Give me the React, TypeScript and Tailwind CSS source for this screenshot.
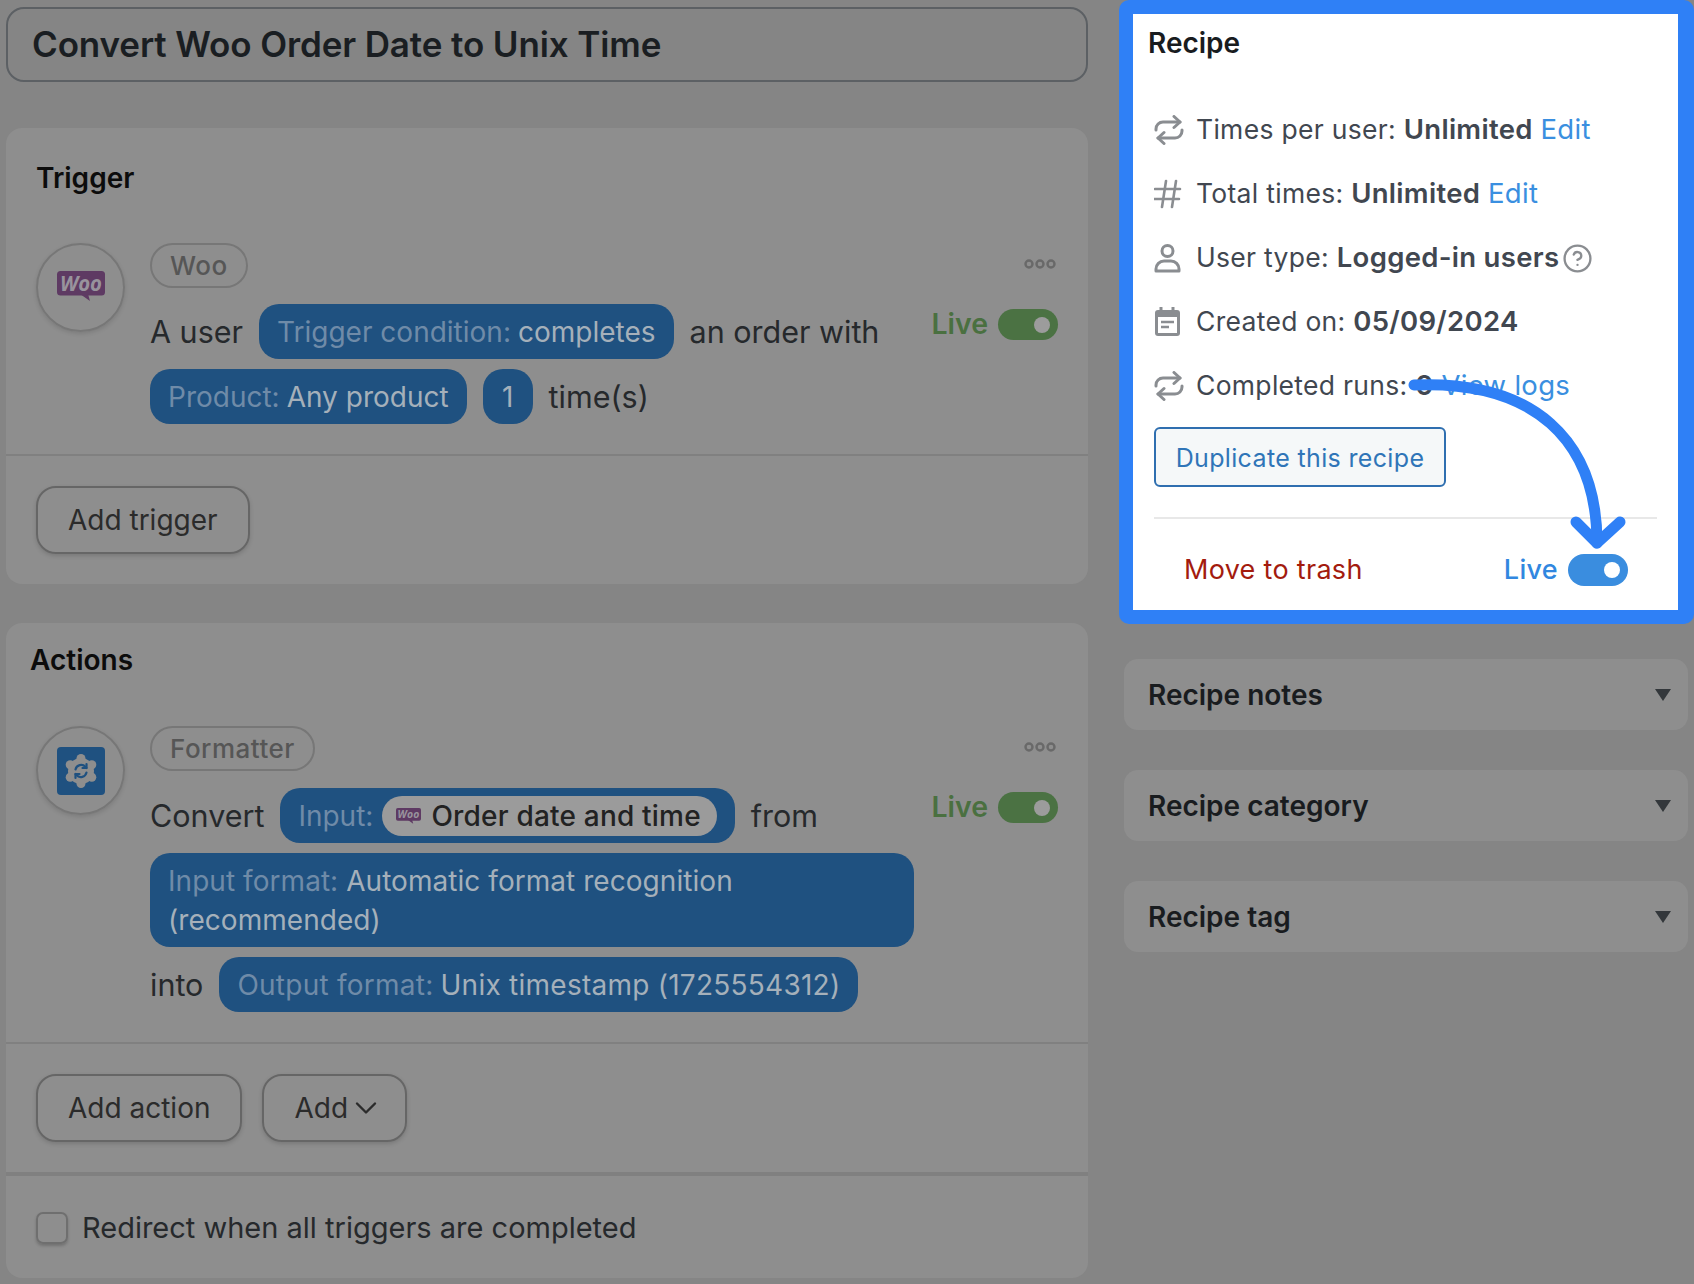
import { ChevronDown, CircleHelp } from "lucide-react";
import type { ReactNode } from "react";

function Pill({ label, value, wide }: { label?: string; value: string; wide?: boolean }) {
  return (
    <span className={`inline-flex h-[55px] items-center rounded-[20px] bg-[#1f5180] whitespace-nowrap text-[28px] text-[#a5b0ba] ${wide ? "px-[18px] tracking-[0.25px]" : "px-[18px]"}`}>
      {label && <span className="mr-[7px] text-[#6f8ba8]">{label}</span>}
      {value}
    </span>
  );
}

function Tag({ children }: { children: ReactNode }) {
  return (
    <div className="flex">
      <span className="flex h-[45px] items-center rounded-full border-2 border-[#777777] px-[18px] text-[26px] leading-none font-medium tracking-[0.5px] text-[#565656]">
        {children}
      </span>
    </div>
  );
}

function Dots() {
  return (
    <svg width="32" height="10" viewBox="0 0 32 10" fill="none" stroke="#696969" strokeWidth="2.4">
      <circle cx="5" cy="5" r="3.5" />
      <circle cx="16" cy="5" r="3.5" />
      <circle cx="27" cy="5" r="3.5" />
    </svg>
  );
}

function LiveToggle() {
  return (
    <div className="flex items-center gap-[10px]">
      <span className="text-[28.5px] leading-none font-semibold text-[#4a7040]">Live</span>
      <span className="flex h-[31px] w-[60px] items-center justify-end rounded-full bg-[#4b7243] pr-[8px]">
        <span className="h-[16px] w-[16px] rounded-full bg-[#9c9c9c]" />
      </span>
    </div>
  );
}

function OutlineButton({ children }: { children: ReactNode }) {
  return (
    <button className="flex h-[68px] items-center rounded-[20px] border-2 border-[#666666] px-[30px] text-[28px] text-[#2b2b2b] shadow-[0_2px_4px_rgba(0,0,0,0.15)]">
      {children}
    </button>
  );
}

function Circle({ children }: { children: ReactNode }) {
  return (
    <div className="flex h-[89px] w-[89px] shrink-0 items-center justify-center rounded-full border-2 border-[#777777] shadow-[0_2px_4px_rgba(0,0,0,0.12)]">
      {children}
    </div>
  );
}

function WooLogo({ width }: { width: number }) {
  return (
    <svg width={width} viewBox="0 0 48 30" className="shrink-0 overflow-visible">
      <rect y="0" width="48" height="24.5" rx="3.5" fill="#5e3a63" />
      <path d="M23 23l10 7-2-7z" fill="#5e3a63" />
      <text x="24" y="19.5" textAnchor="middle" fontSize="21" fontWeight="700" fontStyle="italic" fill="#98939c" style={{ fontFamily: "'Open Sans', Inter, sans-serif" }} textLength="42" lengthAdjust="spacingAndGlyphs">
        Woo
      </text>
    </svg>
  );
}

function FormatterIcon() {
  return (
    <svg width="48" height="48" viewBox="0 0 48 48">
      <rect width="48" height="48" rx="4" fill="#1f5180" />
      <g fill="#8e8e8e">
        <circle cx="24" cy="24" r="13" />
        <circle cx="24" cy="11.5" r="4.5" />
        <circle cx="24" cy="36.5" r="4.5" />
        <circle cx="13.2" cy="17.8" r="4.5" />
        <circle cx="34.8" cy="17.8" r="4.5" />
        <circle cx="13.2" cy="30.2" r="4.5" />
        <circle cx="34.8" cy="30.2" r="4.5" />
      </g>
      <g fill="none" stroke="#1f5180" strokeWidth="2.2" strokeLinecap="round" strokeLinejoin="round">
        <path d="M18.5 22.5a5.8 5.8 0 0 1 10-2.6l1 1.1" />
        <path d="M29.5 17v4h-4" />
        <path d="M29.5 25.5a5.8 5.8 0 0 1-10 2.6l-1-1.1" />
        <path d="M18.5 31v-4h4" />
      </g>
    </svg>
  );
}

function RepeatIcon() {
  return (
    <svg width="30" height="30" viewBox="0 0 30 30" fill="none" stroke="#8a8d91" strokeWidth="3" strokeLinecap="round" strokeLinejoin="round">
      <path d="M20 1.5l6 5.5-6 5.5" />
      <path d="M26 7H9a7 7 0 0 0-7 7v1" />
      <path d="M10 28.5l-6-5.5 6-5.5" />
      <path d="M4 23h17a7 7 0 0 0 7-7v-1" />
    </svg>
  );
}

function HashIcon() {
  return (
    <svg width="30" height="30" viewBox="0 0 30 30" fill="none" stroke="#8a8d91" strokeWidth="2.6" strokeLinecap="round">
      <path d="M1 10h25M0 20h25M12 2L8 28M22 2l-4 26" />
    </svg>
  );
}

function UserIcon() {
  return (
    <svg width="30" height="30" viewBox="0 0 30 30" fill="none" stroke="#8a8d91" strokeWidth="3" strokeLinejoin="round">
      <circle cx="13.5" cy="8" r="5.5" />
      <path d="M2 28v-2a8 8 0 0 1 8-8h7a8 8 0 0 1 8 8v2z" />
    </svg>
  );
}

function CalendarIcon() {
  return (
    <svg width="30" height="30" viewBox="0 0 30 30" fill="none">
      <path d="M7 0.5v4M19 0.5v4" stroke="#8a8d91" strokeWidth="3" strokeLinecap="round" />
      <rect x="1" y="3" width="25" height="26" rx="3" fill="#8a8d91" />
      <rect x="4" y="10" width="19" height="16" fill="#ffffff" />
      <path d="M7 15h13M7 20h8" stroke="#8a8d91" strokeWidth="2.4" />
    </svg>
  );
}

function InfoRow({ icon, children }: { icon: ReactNode; children: ReactNode }) {
  return (
    <div className="flex h-[34px] items-center">
      <span className="flex w-[42px] shrink-0">{icon}</span>
      <span className="text-[26.5px] tracking-[0.3px] whitespace-nowrap text-[#414750]">{children}</span>
    </div>
  );
}

function Strong({ children }: { children: ReactNode }) {
  return <b className="text-[27.5px] font-semibold">{children}</b>;
}

function Link({ children }: { children: ReactNode }) {
  return <span className="text-[27.5px] text-[#3a8fe0]">{children}</span>;
}

function SideCard({ title }: { title: string }) {
  return (
    <div className="flex h-[71px] items-center justify-between rounded-[14px] bg-[#8e8e8e] pr-[17px] pl-[24px]">
      <span className="text-[28px] font-semibold text-[#191c1f]">{title}</span>
      <span className="h-0 w-0 border-x-[8px] border-t-[12px] border-x-transparent border-t-[#33373b]" />
    </div>
  );
}

export default function App() {
  return (
    <div
      className="flex h-[1284px] w-[1694px] overflow-hidden bg-[#858585] text-[30.5px] text-[#26292c]"
      style={{ fontFamily: "Inter, 'Noto Sans', sans-serif" }}
    >
      {/* Left column */}
      <div className="ml-[6px] flex w-[1082px] shrink-0 flex-col pt-[7px]">
        <div className="flex h-[75px] items-center rounded-[18px] border-2 border-[#5c6064] pl-[24px] text-[35px] font-semibold tracking-[-0.12px] text-[#1a1e22]">
          Convert Woo Order Date to Unix Time
        </div>

        {/* Trigger */}
        <div className="mt-[46px] flex h-[456px] flex-col rounded-[16px] bg-[#8e8e8e]">
          <div className="pt-[35px] pl-[30px] text-[28px] leading-[30px] font-semibold text-[#0c0c0c]">Trigger</div>
          <div className="mt-[50px] flex h-[213px] gap-[25px] border-b-2 border-[#808080] pr-[30px] pl-[30px]">
            <Circle>
              <div className="mb-[3px] flex">
                <WooLogo width={48} />
              </div>
            </Circle>
            <div className="min-w-0 flex-1">
              <Tag>Woo</Tag>
              <div className="mt-[16px] flex flex-wrap items-center gap-x-[16px] gap-y-[10px]">
                <span>A user</span>
                <Pill label="Trigger condition:" value="completes" />
                <span>an order with</span>
                <div className="flex basis-full items-center gap-[16px]">
                  <Pill label="Product:" value="Any product" />
                  <span className="inline-flex h-[55px] w-[50px] items-center justify-center rounded-[20px] bg-[#1f5180] text-[28px] text-[#a5b0ba]">1</span>
                  <span>time(s)</span>
                </div>
              </div>
            </div>
            <div className="flex w-[128px] shrink-0 flex-col items-end">
              <div className="mt-[16px] mr-[2px] flex">
                <Dots />
              </div>
              <div className="mt-[40px]">
                <LiveToggle />
              </div>
            </div>
          </div>
          <div className="pt-[30px] pl-[30px]">
            <div className="flex">
              <OutlineButton>Add trigger</OutlineButton>
            </div>
          </div>
        </div>

        {/* Actions */}
        <div className="mt-[39px] flex h-[655px] flex-col rounded-[16px] bg-[#8e8e8e]">
          <div className="pt-[22px] pl-[24px] text-[28px] leading-[30px] font-semibold text-[#0c0c0c]">Actions</div>
          <div className="mt-[51px] flex h-[318px] gap-[25px] border-b-2 border-[#808080] pr-[30px] pl-[30px]">
            <Circle>
              <FormatterIcon />
            </Circle>
            <div className="min-w-0 flex-1">
              <Tag>Formatter</Tag>
              <div className="mt-[17px] flex items-center gap-[16px]">
                <span>Convert</span>
                <span className="inline-flex h-[55px] items-center rounded-[20px] bg-[#1f5180] px-[18px] text-[28px] whitespace-nowrap">
                  <span className="mr-[9px] text-[#6f8ba8]">Input:</span>
                  <span className="inline-flex h-[40px] items-center rounded-full bg-[#9b9b9b] pr-[16px] pl-[14px] font-medium tracking-[0.2px] text-[#222222]">
                    <span className="mr-[10px] flex">
                      <WooLogo width={25} />
                    </span>
                    Order date and time
                  </span>
                </span>
                <span>from</span>
              </div>
              <div className="mt-[10px] w-[764px] rounded-[20px] bg-[#1f5180] px-[18px] pt-[9px] pb-[7px] text-[28px] leading-[39px] tracking-[0.05px] text-[#a5b0ba]">
                <span className="text-[#6f8ba8]">Input format:</span> Automatic format recognition (recommended)
              </div>
              <div className="mt-[10px] flex items-center gap-[16px]">
                <span>into</span>
                <Pill wide label="Output format:" value="Unix timestamp (1725554312)" />
              </div>
            </div>
            <div className="flex w-[128px] shrink-0 flex-col items-end">
              <div className="mt-[16px] mr-[2px] flex">
                <Dots />
              </div>
              <div className="mt-[40px]">
                <LiveToggle />
              </div>
            </div>
          </div>
          <div className="flex h-[132px] gap-[20px] border-b-4 border-[#808080] pt-[30px] pl-[30px]">
            <OutlineButton>Add action</OutlineButton>
            <OutlineButton>
              Add
              <ChevronDown size={36} strokeWidth={1.6} className="mr-[-9px]" />
            </OutlineButton>
          </div>
          <div className="flex items-center gap-[14px] pt-[30px] pl-[30px] text-[29px]">
            <span className="h-[32px] w-[32px] rounded-[7px] border-2 border-[#6f6f6f] shadow-[0_2px_3px_rgba(0,0,0,0.2)]" />
            <span>Redirect when all triggers are completed</span>
          </div>
        </div>
      </div>

      {/* Right column */}
      <div className="ml-[31px] flex w-[575px] shrink-0 flex-col">
        <div className="relative h-[624px] rounded-[10px] border-y-[14px] border-r-[16px] border-l-[14px] border-[#2f80f6] bg-white">
          <div className="pt-[14px] pl-[15px] text-[28px] leading-[30px] font-semibold text-[#191c1f]">Recipe</div>
          <div className="flex flex-col gap-[30px] pt-[55px] pl-[21px]">
            <InfoRow icon={<RepeatIcon />}>
              Times per user: <Strong>Unlimited</Strong> <Link>Edit</Link>
            </InfoRow>
            <InfoRow icon={<HashIcon />}>
              Total times: <Strong>Unlimited</Strong> <Link>Edit</Link>
            </InfoRow>
            <InfoRow icon={<UserIcon />}>
              <span className="inline-flex items-center">
                User type:&nbsp;<Strong>Logged-in users</Strong>
                <CircleHelp size={31} strokeWidth={1.8} color="#8a8d91" className="ml-[3px]" />
              </span>
            </InfoRow>
            <InfoRow icon={<CalendarIcon />}>
              Created on: <Strong>05/09/2024</Strong>
            </InfoRow>
            <InfoRow icon={<RepeatIcon />}>
              Completed runs: <Strong>0</Strong> <Link>View logs</Link>
            </InfoRow>
          </div>
          <div className="pt-[24px] pl-[21px]">
            <button className="flex h-[60px] w-[292px] items-center justify-center rounded-[6px] border-2 border-[#2f6fb0] bg-[#f5f8f9] pt-[3px] text-[25px] tracking-[0.35px] text-[#2f75b8]">
              Duplicate this recipe
            </button>
          </div>
          <div className="mx-[21px] mt-[30px] h-[2px] bg-[#e8e8e8]" />
          <div className="flex items-center justify-between pt-[31px] pr-[50px] pl-[51px]">
            <span className="text-[27px] tracking-[0.3px] text-[#a31b0e]">Move to trash</span>
            <div className="flex items-center gap-[10px]">
              <span className="text-[27px] font-medium tracking-[0.3px] text-[#3187e0]">Live</span>
              <span className="flex h-[32px] w-[60px] items-center justify-end rounded-full bg-[#3a8ddf] pr-[8px]">
                <span className="h-[16px] w-[16px] rounded-full bg-white" />
              </span>
            </div>
          </div>
          {/* Callout arrow over the panel */}
          <svg className="pointer-events-none absolute top-[-14px] left-[-14px]" width="575" height="623" fill="none" stroke="#2f80f6" strokeWidth="11" strokeLinecap="round" strokeLinejoin="round">
            <path d="M295 385C415 380 478 440 478 543" />
            <path d="M457 522L478 543L501 522" />
          </svg>
        </div>
        <div className="mt-[35px] mr-[6px] ml-[5px] flex flex-col gap-[40px]">
          <SideCard title="Recipe notes" />
          <SideCard title="Recipe category" />
          <SideCard title="Recipe tag" />
        </div>
      </div>
    </div>
  );
}
